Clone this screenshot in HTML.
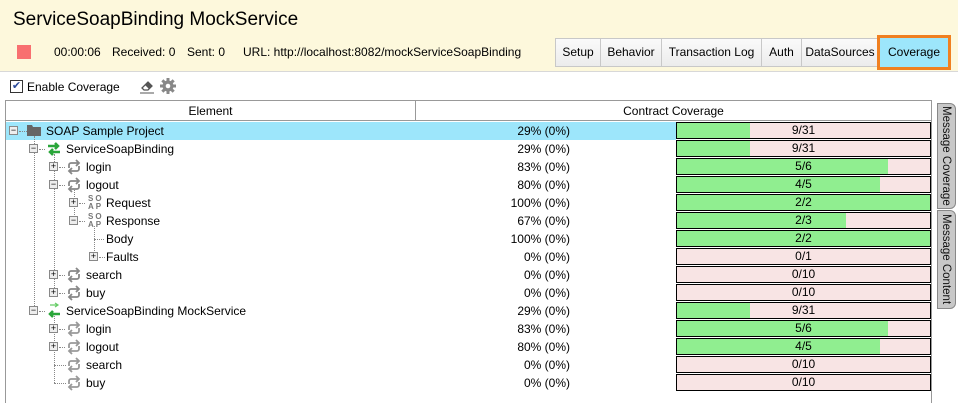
<!DOCTYPE html>
<html><head><style>
*{margin:0;padding:0;box-sizing:border-box}
body{width:958px;height:403px;background:#fff;font-family:"Liberation Sans",sans-serif;font-size:12px;color:#000;position:relative;overflow:hidden}
.a{position:absolute;white-space:nowrap}
.hdr{left:0;top:0;width:958px;height:72px;background:#fdf8dc;border-bottom:1px solid #d8d8d8}
.tab{top:38px;height:29px;border:1px solid #c8c8c8;background:linear-gradient(#fafafa,#ececec);line-height:27px;text-align:center;font-size:12px}
.exp{width:9px;height:9px;border:1px solid #888;background:#eee;font-size:9px;line-height:7px;text-align:center;color:#000}
.bar{left:676px;width:255px;height:17px;border:1px solid #000;background:#f8e4e4;overflow:hidden}
.bar .g{position:absolute;left:0;top:0;bottom:0;background:#90ee90}
.bar .t{position:absolute;left:0;right:0;top:0;text-align:center;line-height:15px}
.pct{left:420px;width:150px;text-align:right;line-height:18px}
.vt{writing-mode:vertical-rl;font-size:11.5px;font-weight:normal;color:#111;background:#c8c8c8;border:1px solid #888;border-radius:0 6px 6px 0;text-align:center;line-height:18px;overflow:hidden}
.dot{border-left:1px dotted #888}
.doth{border-top:1px dotted #888}
.tt{top:1px}
</style></head><body>
<div class="a hdr"></div>
<div class="a" style="left:13px;top:9px;font-size:19px">ServiceSoapBinding MockService</div>
<div class="a" style="left:17px;top:45px;width:14px;height:14px;background:#f87070"></div>
<div class="a" style="left:54px;top:45px">00:00:06</div>
<div class="a" style="left:112px;top:45px">Received: 0</div>
<div class="a" style="left:187px;top:45px">Sent: 0</div>
<div class="a" style="left:243px;top:45px">URL: http://localhost:8082/mockServiceSoapBinding</div>
<div class="a tab" style="left:555px;width:46px">Setup</div>
<div class="a tab" style="left:600px;width:62px">Behavior</div>
<div class="a tab" style="left:661px;width:101px">Transaction Log</div>
<div class="a tab" style="left:761px;width:41px">Auth</div>
<div class="a tab" style="left:801px;width:78px">DataSources</div>
<div class="a" style="left:877px;top:35px;width:74px;height:35px;border:3px solid #f08020;background:#9de6fb;line-height:29px;text-align:center">Coverage</div>

<div class="a" style="left:10px;top:80px;width:13px;height:13px;border:1px solid #333;background:#fff;color:#2a4a9a;font-size:11px;line-height:11px;text-align:center">✔</div>
<div class="a" style="left:27px;top:80px">Enable Coverage</div>
<svg class="a" style="left:139px;top:78px" width="16" height="16"><path d="M3 10l6-6 4 4-4 4H5z" fill="#fff" stroke="#555" stroke-width="1.3"/><path d="M6 7l4 4 3-3-4-4z" fill="#555"/><path d="M1 15h14" stroke="#555"/></svg>
<svg class="a" style="left:160px;top:78px" width="16" height="16" viewBox="0 0 16 16"><g fill="#888"><circle cx="8" cy="8" r="5.5"/><rect x="6.5" y="0" width="3" height="16"/><rect x="0" y="6.5" width="16" height="3"/><rect x="6.5" y="0" width="3" height="16" transform="rotate(45 8 8)"/><rect x="6.5" y="0" width="3" height="16" transform="rotate(-45 8 8)"/></g><circle cx="8" cy="8" r="2.3" fill="#fff"/></svg>

<div class="a" style="left:5px;top:100px;width:927px;height:303px;border:1px solid #999;border-bottom:none"></div>
<div class="a" style="left:6px;top:101px;width:410px;height:20px;border-right:1px solid #999;border-bottom:1px solid #999;text-align:center;line-height:20px">Element</div>
<div class="a" style="left:416px;top:101px;width:515px;height:20px;border-bottom:1px solid #999;text-align:center;line-height:20px">Contract Coverage</div>
<div class="a" style="left:6px;top:122px;width:670px;height:18px;background:#9de6fb"></div>

<div class="a dot" style="left:34px;top:136px;height:174px"></div>
<div class="a dot" style="left:54px;top:154px;height:138px"></div>
<div class="a dot" style="left:54px;top:316px;height:67px"></div>
<div class="a dot" style="left:74px;top:190px;height:31px"></div>
<div class="a dot" style="left:94px;top:226px;height:31px"></div>
<div class="a doth" style="left:94px;top:239px;width:10px"></div>
<div class="a doth" style="left:54px;top:365px;width:12px"></div>
<div class="a doth" style="left:54px;top:383px;width:12px"></div>

<div class="a exp" style="left:9px;top:126px">−</div><div class="a doth" style="left:19px;top:131px;width:8px"></div>
<svg class="a" style="left:27px;top:123px" width="14" height="13"><path d="M0 2h5l1 2h8v9H0z" fill="#666"/></svg>
<div class="a" style="left:46px;top:124px">SOAP Sample Project</div>

<div class="a exp" style="left:29px;top:144px">−</div><div class="a doth" style="left:39px;top:149px;width:6px"></div>
<svg class="a" style="left:46px;top:141px" width="16" height="16"><path d="M2 5h10M9 2l3 3-3 3M14 11H4M7 8l-3 3 3 3" stroke="#2aa63a" stroke-width="2.5" fill="none"/></svg>
<div class="a" style="left:66px;top:142px">ServiceSoapBinding</div>

<div class="a exp" style="left:49px;top:162px">+</div><div class="a doth" style="left:59px;top:167px;width:6px"></div>
<svg class="a" style="left:66px;top:159px" width="16" height="16"><path d="M3 9V6a2 2 0 0 1 2-2h8M10 1l3 3-3 3M13 7v3a2 2 0 0 1-2 2H3M6 9l-3 3 3 3" stroke="#888" stroke-width="1.8" fill="none"/></svg>
<div class="a" style="left:86px;top:160px">login</div>

<div class="a exp" style="left:49px;top:180px">−</div><div class="a doth" style="left:59px;top:185px;width:6px"></div>
<svg class="a" style="left:66px;top:177px" width="16" height="16"><path d="M3 9V6a2 2 0 0 1 2-2h8M10 1l3 3-3 3M13 7v3a2 2 0 0 1-2 2H3M6 9l-3 3 3 3" stroke="#888" stroke-width="1.8" fill="none"/></svg>
<div class="a" style="left:86px;top:178px">logout</div>

<div class="a exp" style="left:69px;top:198px">+</div><div class="a doth" style="left:79px;top:203px;width:6px"></div>
<div class="a" style="left:88px;top:195px;font-size:8px;line-height:8px;color:#777;font-weight:bold;letter-spacing:2px">SO<br>AP</div>
<div class="a" style="left:106px;top:196px">Request</div>

<div class="a exp" style="left:69px;top:216px">−</div><div class="a doth" style="left:79px;top:221px;width:6px"></div>
<div class="a" style="left:88px;top:213px;font-size:8px;line-height:8px;color:#777;font-weight:bold;letter-spacing:2px">SO<br>AP</div>
<div class="a" style="left:106px;top:214px">Response</div>

<div class="a" style="left:106px;top:232px">Body</div>
<div class="a exp" style="left:89px;top:252px">+</div><div class="a doth" style="left:99px;top:257px;width:6px"></div>
<div class="a" style="left:106px;top:250px">Faults</div>

<div class="a exp" style="left:49px;top:270px">+</div><div class="a doth" style="left:59px;top:275px;width:6px"></div>
<svg class="a" style="left:66px;top:267px" width="16" height="16"><path d="M3 9V6a2 2 0 0 1 2-2h8M10 1l3 3-3 3M13 7v3a2 2 0 0 1-2 2H3M6 9l-3 3 3 3" stroke="#888" stroke-width="1.8" fill="none"/></svg>
<div class="a" style="left:86px;top:268px">search</div>

<div class="a exp" style="left:49px;top:288px">+</div><div class="a doth" style="left:59px;top:293px;width:6px"></div>
<svg class="a" style="left:66px;top:285px" width="16" height="16"><path d="M3 9V6a2 2 0 0 1 2-2h8M10 1l3 3-3 3M13 7v3a2 2 0 0 1-2 2H3M6 9l-3 3 3 3" stroke="#888" stroke-width="1.8" fill="none"/></svg>
<div class="a" style="left:86px;top:286px">buy</div>

<div class="a exp" style="left:29px;top:306px">−</div><div class="a doth" style="left:39px;top:311px;width:6px"></div>
<svg class="a" style="left:46px;top:302px" width="16" height="17"><path d="M4 3h7M9 1l3 2-3 2" stroke="#6c6" stroke-width="1.2" fill="none"/><path d="M14 12H4M7 9l-3 3 3 3" stroke="#2aa63a" stroke-width="2.5" fill="none"/></svg>
<div class="a" style="left:66px;top:304px">ServiceSoapBinding MockService</div>

<div class="a exp" style="left:49px;top:324px">+</div><div class="a doth" style="left:59px;top:329px;width:6px"></div>
<svg class="a" style="left:66px;top:321px" width="16" height="16"><path d="M3 9V6a2 2 0 0 1 2-2h8M10 1l3 3-3 3M13 7v3a2 2 0 0 1-2 2H3M6 9l-3 3 3 3" stroke="#999" stroke-width="1.8" fill="none"/></svg>
<div class="a" style="left:86px;top:322px">login</div>

<div class="a exp" style="left:49px;top:342px">+</div><div class="a doth" style="left:59px;top:347px;width:6px"></div>
<svg class="a" style="left:66px;top:339px" width="16" height="16"><path d="M3 9V6a2 2 0 0 1 2-2h8M10 1l3 3-3 3M13 7v3a2 2 0 0 1-2 2H3M6 9l-3 3 3 3" stroke="#999" stroke-width="1.8" fill="none"/></svg>
<div class="a" style="left:86px;top:340px">logout</div>

<svg class="a" style="left:66px;top:357px" width="16" height="16"><path d="M3 9V6a2 2 0 0 1 2-2h8M10 1l3 3-3 3M13 7v3a2 2 0 0 1-2 2H3M6 9l-3 3 3 3" stroke="#999" stroke-width="1.8" fill="none"/></svg>
<div class="a" style="left:86px;top:358px">search</div>
<svg class="a" style="left:66px;top:375px" width="16" height="16"><path d="M3 9V6a2 2 0 0 1 2-2h8M10 1l3 3-3 3M13 7v3a2 2 0 0 1-2 2H3M6 9l-3 3 3 3" stroke="#999" stroke-width="1.8" fill="none"/></svg>
<div class="a" style="left:86px;top:376px">buy</div>

<div class="a pct" style="top:122px">29% (0%)</div>
<div class="a pct" style="top:140px">29% (0%)</div>
<div class="a pct" style="top:158px">83% (0%)</div>
<div class="a pct" style="top:176px">80% (0%)</div>
<div class="a pct" style="top:194px">100% (0%)</div>
<div class="a pct" style="top:212px">67% (0%)</div>
<div class="a pct" style="top:230px">100% (0%)</div>
<div class="a pct" style="top:248px">0% (0%)</div>
<div class="a pct" style="top:266px">0% (0%)</div>
<div class="a pct" style="top:284px">0% (0%)</div>
<div class="a pct" style="top:302px">29% (0%)</div>
<div class="a pct" style="top:320px">83% (0%)</div>
<div class="a pct" style="top:338px">80% (0%)</div>
<div class="a pct" style="top:356px">0% (0%)</div>
<div class="a pct" style="top:374px">0% (0%)</div>

<div class="a bar" style="top:122px"><div class="g" style="width:73px"></div><div class="t">9/31</div></div>
<div class="a bar" style="top:140px"><div class="g" style="width:73px"></div><div class="t">9/31</div></div>
<div class="a bar" style="top:158px"><div class="g" style="width:211px"></div><div class="t">5/6</div></div>
<div class="a bar" style="top:176px"><div class="g" style="width:203px"></div><div class="t">4/5</div></div>
<div class="a bar" style="top:194px"><div class="g" style="width:255px"></div><div class="t">2/2</div></div>
<div class="a bar" style="top:212px"><div class="g" style="width:169px"></div><div class="t">2/3</div></div>
<div class="a bar" style="top:230px"><div class="g" style="width:255px"></div><div class="t">2/2</div></div>
<div class="a bar" style="top:248px"><div class="t">0/1</div></div>
<div class="a bar" style="top:266px"><div class="t">0/10</div></div>
<div class="a bar" style="top:284px"><div class="t">0/10</div></div>
<div class="a bar" style="top:302px"><div class="g" style="width:73px"></div><div class="t">9/31</div></div>
<div class="a bar" style="top:320px"><div class="g" style="width:211px"></div><div class="t">5/6</div></div>
<div class="a bar" style="top:338px"><div class="g" style="width:203px"></div><div class="t">4/5</div></div>
<div class="a bar" style="top:356px"><div class="t">0/10</div></div>
<div class="a bar" style="top:374px"><div class="t">0/10</div></div>

<div class="a vt" style="left:937px;top:103px;width:19px;height:106px">Message Coverage</div>
<div class="a vt" style="left:937px;top:210px;width:19px;height:99px">Message Content</div>
</body></html>
